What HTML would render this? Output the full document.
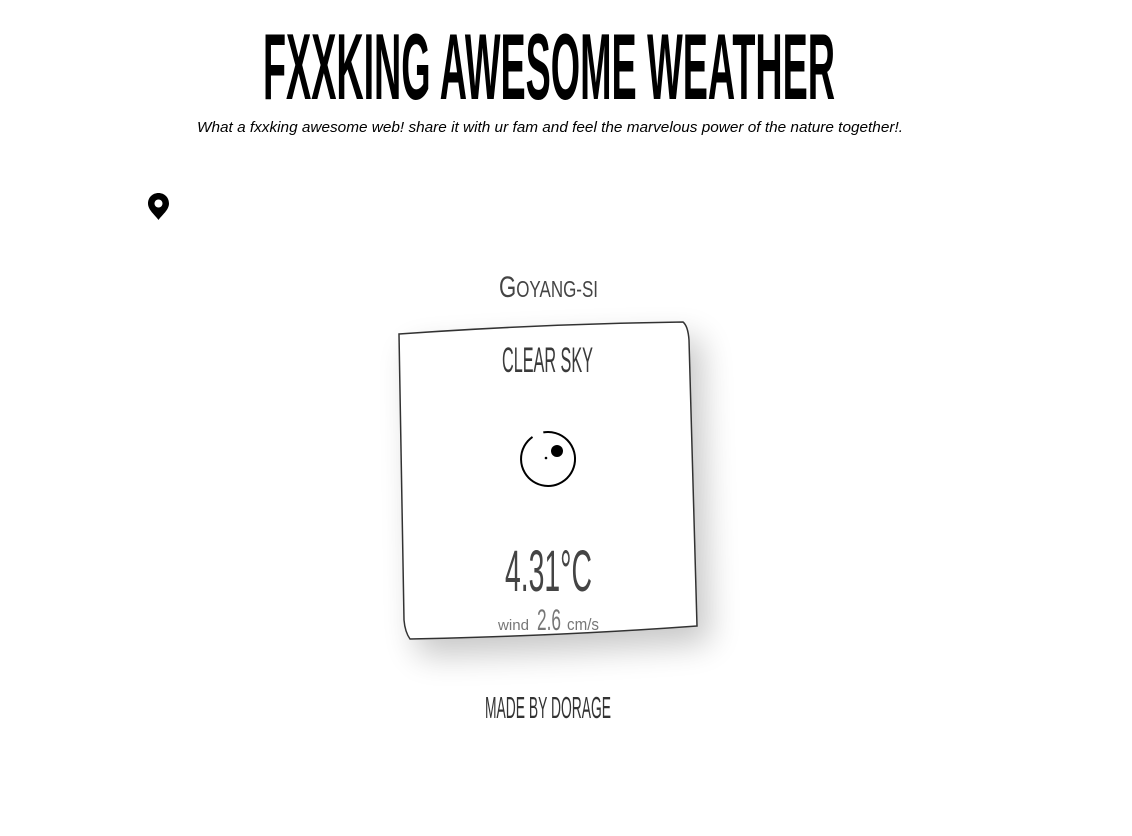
<!DOCTYPE html>
<html><head><meta charset="utf-8"><style>
html,body{margin:0;padding:0;background:#fff;width:1132px;height:836px;overflow:hidden}
svg{display:block}
</style></head><body>
<svg width="1132" height="836" viewBox="0 0 1132 836" xmlns="http://www.w3.org/2000/svg">
<defs>
<filter id="sh" x="-30%" y="-30%" width="160%" height="160%">
<feGaussianBlur in="SourceAlpha" stdDeviation="16"/>
<feOffset dx="12" dy="16" result="b"/>
<feComponentTransfer><feFuncA type="linear" slope="0.22"/></feComponentTransfer>
<feMerge><feMergeNode/><feMergeNode in="SourceGraphic"/></feMerge>
</filter>
</defs>
<text x="263" y="99" textLength="572" lengthAdjust="spacingAndGlyphs" font-family="Liberation Sans, sans-serif" font-weight="bold" font-size="94" fill="#000">FXXKING AWESOME WEATHER</text>
<text x="197" y="132" textLength="706" lengthAdjust="spacingAndGlyphs" font-family="Liberation Sans, sans-serif" font-style="italic" font-size="15" fill="#000">What a fxxking awesome web! share it with ur fam and feel the marvelous power of the nature together!.</text>
<path d="M158.5 193 C152.5 193 148 197.5 148 203.5 C148 210 155 215 158.5 220 C162 215 169 210 169 203.5 C169 197.5 164.5 193 158.5 193 Z M158.5 199.5 A4 4 0 1 1 158.49 199.5 Z" fill="#000" fill-rule="evenodd"/>
<text x="499" y="297" textLength="99" lengthAdjust="spacingAndGlyphs" font-family="Liberation Sans, sans-serif" font-size="30" fill="#444">G<tspan font-size="23">OYANG-SI</tspan></text>
<path d="M399 334 Q540 324 683 322 Q688 326 689 340 Q693 480 697 626 Q560 636 410 639 Q405 632 404 620 Q401 480 399 334 Z" fill="#fff" stroke="#333" stroke-width="1.5" filter="url(#sh)"/>
<text x="502" y="372" textLength="91" lengthAdjust="spacingAndGlyphs" font-family="Liberation Sans, sans-serif" font-size="35" fill="#3a3a3a">CLEAR SKY</text>
<path d="M543.3 432.4 A27 27 0 1 1 532.5 436.9" fill="none" stroke="#000" stroke-width="2"/>
<circle cx="557" cy="451" r="6" fill="#000"/>
<circle cx="546" cy="458" r="1.3" fill="#000"/>
<text x="505" y="591" textLength="87" lengthAdjust="spacingAndGlyphs" font-family="Liberation Sans, sans-serif" font-size="58" fill="#444">4.31°C</text>
<text x="498" y="630" textLength="31" lengthAdjust="spacingAndGlyphs" font-family="Liberation Sans, sans-serif" font-size="15" fill="#777">wind</text>
<text x="537" y="630" textLength="24" lengthAdjust="spacingAndGlyphs" font-family="Liberation Sans, sans-serif" font-size="30" fill="#777">2.6</text>
<text x="567" y="630" textLength="32" lengthAdjust="spacingAndGlyphs" font-family="Liberation Sans, sans-serif" font-size="17" fill="#777">cm/s</text>
<text x="485" y="718" textLength="126" lengthAdjust="spacingAndGlyphs" font-family="Liberation Sans, sans-serif" font-size="31" fill="#333">MADE BY DORAGE</text>
</svg>
</body></html>
